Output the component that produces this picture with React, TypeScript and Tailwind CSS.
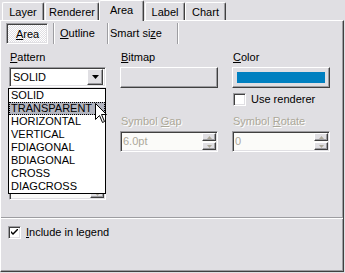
import React from "react"

const raised = "border border-t-white border-l-white border-r-[#404040] border-b-[#404040] shadow-[inset_-1px_-1px_#9d9da1]"
const sunken = "border border-t-[#9d9da1] border-l-[#9d9da1] border-r-white border-b-white shadow-[inset_1px_1px_#404040,inset_-1px_-1px_#e0dfe3]"

const patterns = ["SOLID", "TRANSPARENT", "HORIZONTAL", "VERTICAL", "FDIAGONAL", "BDIAGONAL", "CROSS", "DIAGCROSS"]

function U({ children }: { children: React.ReactNode }) {
  return <span className="underline underline-offset-[1px]">{children}</span>
}

function Tab({ label, width, selected, ml = 0 }: { label: string, width: number, selected?: boolean, ml?: number }) {
  return (
    <div
      className={`flex justify-center pt-[3px] border-t border-l border-t-white border-l-white border-r border-r-[#404040] shadow-[inset_-1px_0_#9d9da1] rounded-t-[2px] ${selected ? "h-[21px] -mb-[1px] relative z-10 bg-[#e0dfe3]" : "h-[18px]"}`}
      style={{ width, marginLeft: ml }}
    >
      {label}
    </div>
  )
}

function Separator() {
  return <div className="w-[2px] h-[21px] border-l border-l-[#9d9da1] border-r border-r-white" />
}

function Checkbox({ checked }: { checked?: boolean }) {
  return (
    <div className={`w-[13px] h-[13px] bg-white flex items-center justify-center ${sunken}`}>
      {checked && (
        <svg width="7" height="7" viewBox="0 0 7 7">
          <path d="M0 2 L0 4 L2 6 L7 1 L7 -1 L2 4 Z" fill="#000" />
        </svg>
      )}
    </div>
  )
}

function SpinBox({ value }: { value: string }) {
  return (
    <div className={`h-[21px] bg-[#fbfbf9] flex items-center pl-[2px] pr-[1px] ${sunken}`}>
      <span className="flex-1 text-[#aca899]">{value}</span>
      <div className="flex flex-col gap-[1px] w-[14px] h-[17px]">
        <div className={`flex-1 bg-[#e0dfe3] flex items-center justify-center ${raised}`}>
          <svg width="5" height="3" viewBox="0 0 5 3"><path d="M2.5 0 L5 3 L0 3 Z" fill="#aca899" /></svg>
        </div>
        <div className={`flex-1 bg-[#e0dfe3] flex items-center justify-center ${raised}`}>
          <svg width="5" height="3" viewBox="0 0 5 3"><path d="M0 0 L5 0 L2.5 3 Z" fill="#aca899" /></svg>
        </div>
      </div>
    </div>
  )
}

function DisabledLabel({ children }: { children: React.ReactNode }) {
  return <div className="ml-[1px] h-[13px] text-[#aca899] [text-shadow:1px_1px_0_#fff]">{children}</div>
}

export default function App() {
  return (
    <div className="w-[345px] h-[273px] bg-[#e0dfe3] font-['Liberation_Sans',Arial,sans-serif] text-[11px] leading-[13px] text-black relative overflow-hidden">
      {/* top tabs */}
      <div className="flex items-end h-[20px]">
        <Tab label="Layer" width={42} ml={2} />
        <Tab label="Renderer" width={54} ml={1} />
        <Tab label="Area" width={45} selected />
        <Tab label="Label" width={40} ml={1} />
        <Tab label="Chart" width={41} />
      </div>

      {/* page */}
      <div className="w-[344px] h-[252px] border-t border-l border-t-white border-l-white border-r border-b border-r-[#404040] border-b-[#404040] shadow-[inset_-1px_-1px_#9d9da1] flex flex-col">
        {/* inner tabs */}
        <div className="flex items-center h-[21px] mt-[2px]">
          <div className={`ml-[5px] w-[42px] h-[21px] flex items-center justify-center pt-[1px] pl-[1px] bg-[repeating-conic-gradient(#ffffff_0_25%,#e0dfe3_0_50%)] bg-[length:2px_2px] ${sunken}`}>
            <span><U>A</U>rea</span>
          </div>
          <div className="ml-[5px]"><Separator /></div>
          <div className="w-[52px] pl-[5px]"><U>O</U>utline</div>
          <Separator />
          <div className="w-[68px] pl-[1px]">Smart si<U>z</U>e</div>
          <Separator />
        </div>

        {/* fields */}
        <div className="flex mt-[7px] pl-[8px] gap-x-[14px]">
          <div className="w-[97px] flex flex-col">
            <div className="ml-[1px] h-[13px]"><U>P</U>attern</div>
            <div className="relative mt-[3px]">
              <div className={`h-[20px] bg-white flex items-center pl-[3px] pr-[2px] ${sunken}`}>
                <span className="flex-1">SOLID</span>
                <div className={`w-[16px] h-[16px] bg-[#e0dfe3] flex items-center justify-center ${raised}`}>
                  <svg width="7" height="4" viewBox="0 0 7 4"><path d="M0 0 L7 0 L3.5 4 Z" fill="#000" /></svg>
                </div>
              </div>
              {/* open dropdown list */}
              <div className="absolute left-[-1px] top-[21px] w-[98px] h-[106px] bg-white border border-black z-20">
                {patterns.map((p, i) => (
                  <div
                    key={p}
                    className={`h-[13px] pl-[2px] ${i === 1 ? "bg-[#b2b4bf] outline outline-1 outline-dotted outline-black -outline-offset-1" : ""}`}
                  >
                    {p}
                  </div>
                ))}
              </div>
            </div>
            <div className="mt-[92px]">
              <SpinBox value="" />
            </div>
          </div>

          <div className="w-[98px] flex flex-col">
            <div className="ml-[1px] h-[13px]"><U>B</U>itmap</div>
            <div className={`mt-[3px] h-[21px] bg-[#e0dfe3] ${raised}`} />
            <div className="mt-[27px]">
              <DisabledLabel>Symbol <U>G</U>ap</DisabledLabel>
            </div>
            <div className="mt-[3px]">
              <SpinBox value="6.0pt" />
            </div>
          </div>

          <div className="w-[98px] flex flex-col">
            <div className="ml-[1px] h-[13px]"><U>C</U>olor</div>
            <div className={`mt-[3px] h-[21px] bg-[#e0dfe3] p-[4px] ${raised}`}>
              <div className="w-full h-full bg-[#0080c0]" />
            </div>
            <div className="mt-[5px] ml-[1px] flex items-center gap-[5px]">
              <Checkbox />
              <span>Use renderer</span>
            </div>
            <div className="mt-[9px]">
              <DisabledLabel>Symbol <U>R</U>otate</DisabledLabel>
            </div>
            <div className="mt-[3px]">
              <SpinBox value="0" />
            </div>
          </div>
        </div>

        <div className="mt-[17px] h-[2px] border-t border-t-[#9d9da1] border-b border-b-white" />

        <div className="mt-[7px] ml-[7px] flex items-center gap-[5px]">
          <Checkbox checked />
          <span><U>I</U>nclude in legend</span>
        </div>
      </div>

      {/* mouse pointer */}
      <svg className="absolute left-[95px] top-[103px] z-30" width="13" height="21" viewBox="0 0 13 21">
        <path d="M0.5 0.5 L0.5 16.5 L4.5 12.5 L7.5 19.5 L9.5 18.5 L6.5 11.5 L11.5 11.5 Z" fill="#fff" stroke="#000" strokeWidth="1" />
      </svg>
    </div>
  )
}
